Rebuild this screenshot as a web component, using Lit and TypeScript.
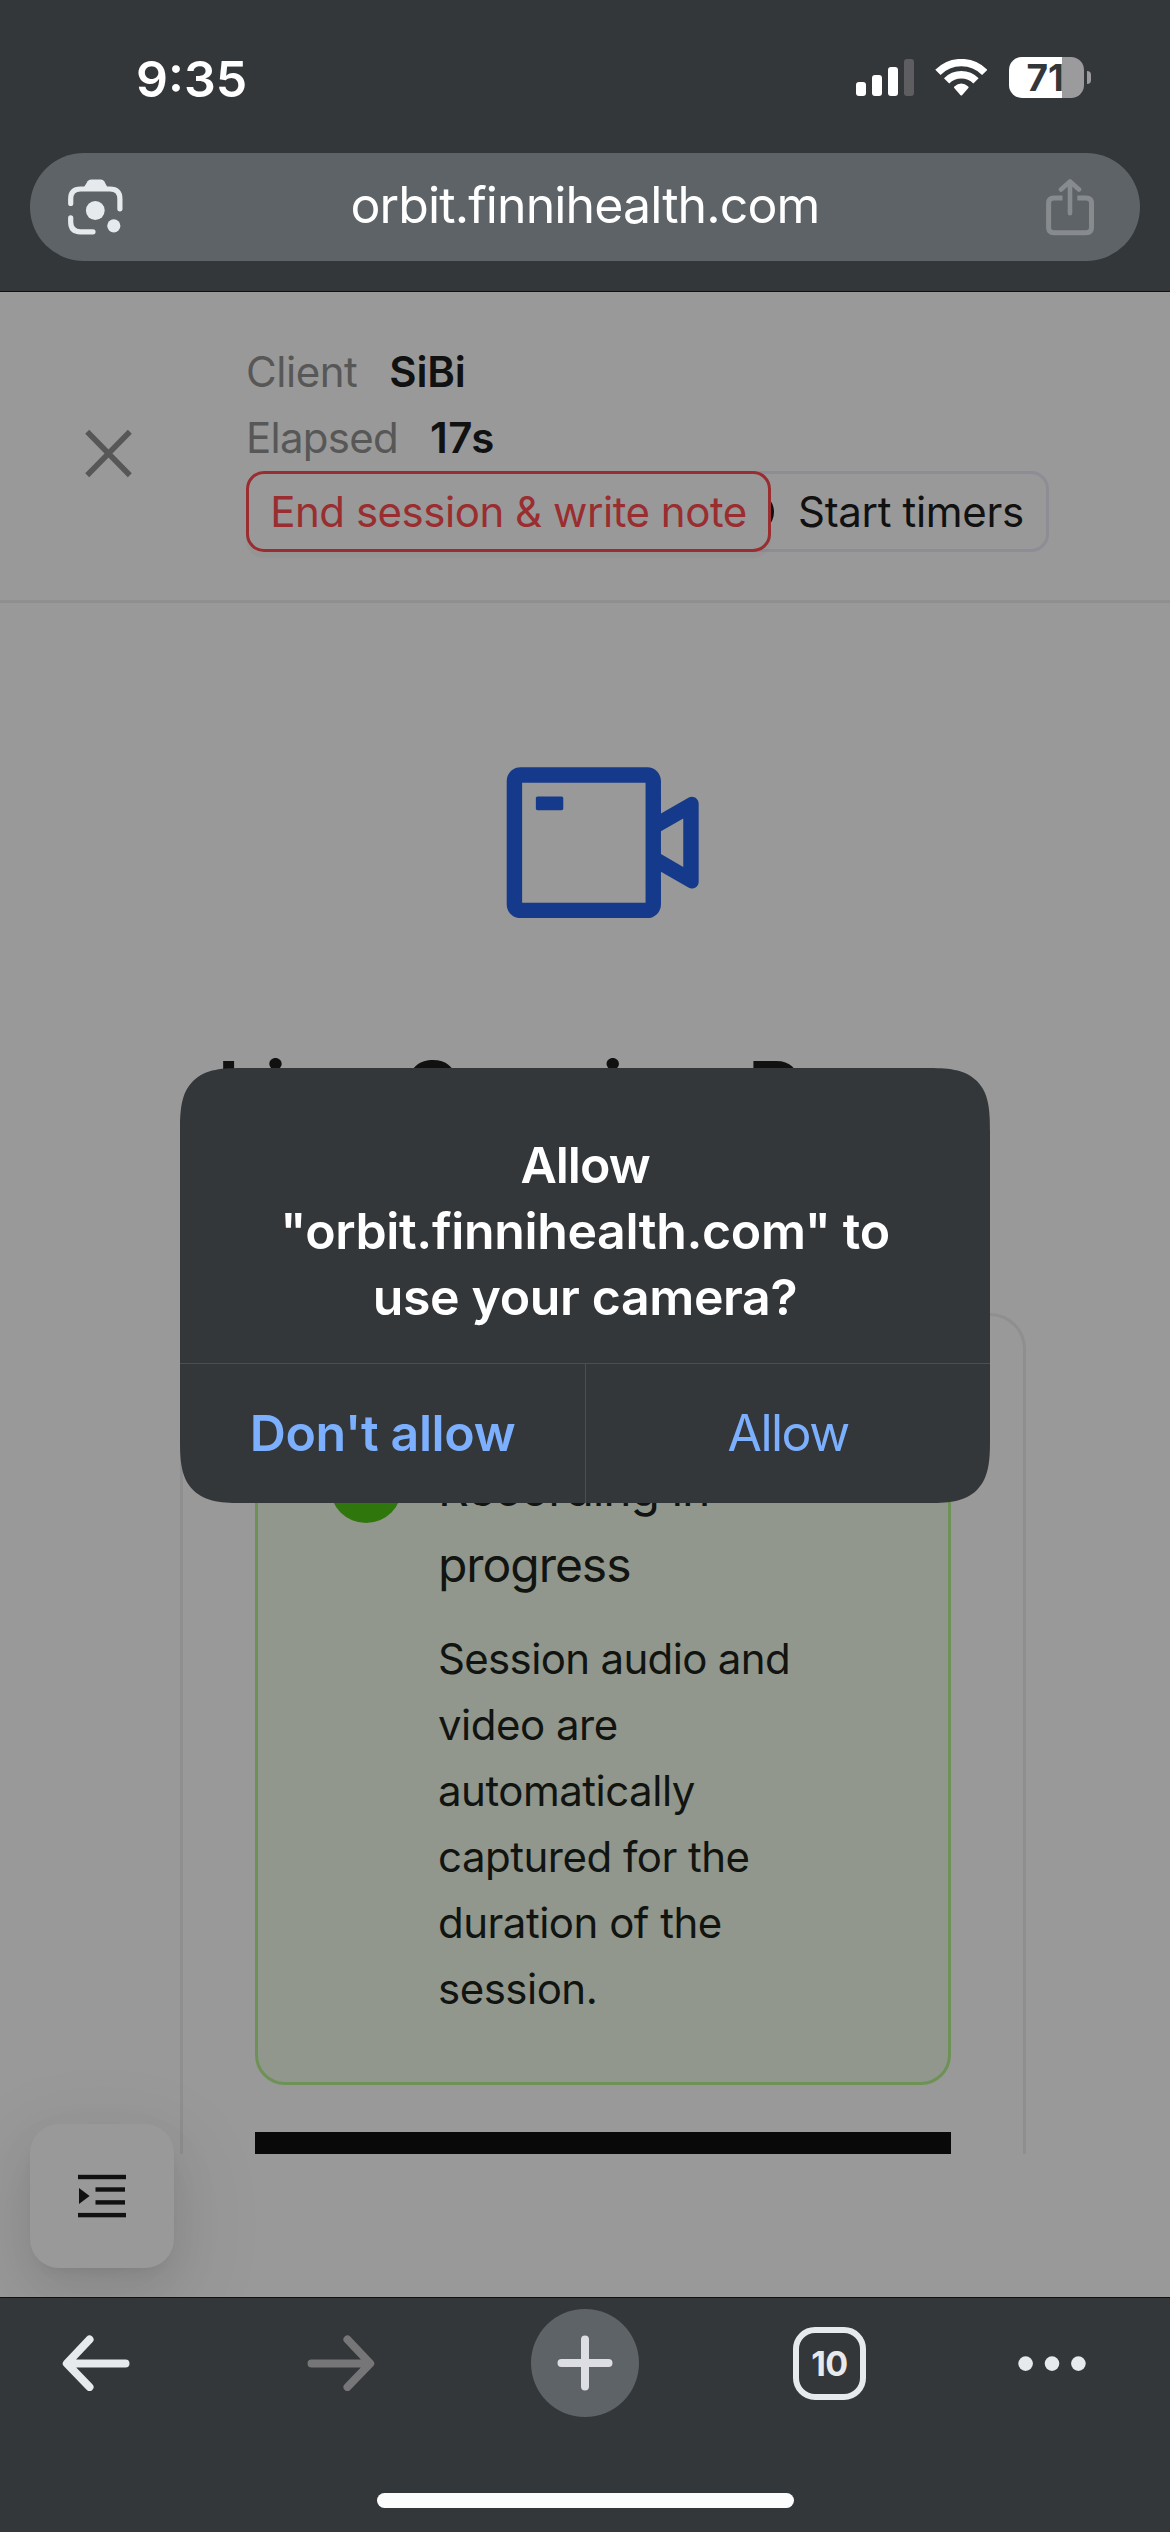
import { LitElement, html, css } from "lit";
import { customElement, property } from "lit/decorators.js";

const base = css`
  * { box-sizing: border-box; }
  :host { display: block; font-family: Inter, "Liberation Sans", sans-serif; }
  svg { display: block; }
`;

@customElement("status-bar")
class StatusBar extends LitElement {
  @property({ type: Number }) battery = 71;
  static styles = [base, css`
    .row { display: flex; height: 153px; padding: 49px 79px 0 136px; color: #fff; }
    .time { font-size: 50px; line-height: 60px; font-weight: 600; letter-spacing: 0; flex: 1; }
    .signal { margin-top: 10px; }
    .wifi { margin: 10px 0 0 21px; }
    .battery {
      margin: 8px 0 0 22px; width: 75px; height: 41px; border-radius: 13px;
      background: linear-gradient(90deg, #fff 53px, #9b9b9d 53px);
      color: #33373a; font-size: 37px; font-weight: 700; line-height: 41px;
      padding-left: 17.5px; letter-spacing: 0;
    }
    .nub { margin: 22px 0 0 3px; width: 4px; height: 13px; border-radius: 0 5px 5px 0; background: #9b9b9d; }
  `];
  render() {
    return html`
      <div class="row">
        <div class="time">9:35</div>
        <svg class="signal" width="58" height="37" viewBox="0 0 58 37" fill="#fff">
          <rect x="0" y="23" width="10" height="14" rx="3" />
          <rect x="16" y="16" width="10" height="21" rx="3" />
          <rect x="32" y="8" width="10" height="29" rx="3" />
          <rect x="48" y="0" width="10" height="37" rx="3" fill="#5e5e60" />
        </svg>
        <svg class="wifi" width="52" height="37" viewBox="935 59 52 37" fill="none" stroke="#fff" stroke-width="7.4">
          <path d="M937.9 72.4A32.8 32.8 0 0 1 984.7 72.4" />
          <path d="M946.6 80.9A20.7 20.7 0 0 1 976 80.9" />
          <path d="M955 87.3Q961.3 82 967.6 87.3L961.3 94.5Z" fill="#fff" stroke-width="2" stroke-linejoin="round" />
        </svg>
        <div class="battery">${this.battery}</div>
        <div class="nub"></div>
      </div>`;
  }
}

@customElement("address-bar")
class AddressBar extends LitElement {
  static styles = [base, css`
    :host { padding: 0 30px 30px; }
    .pill {
      display: flex; align-items: center; justify-content: space-between;
      height: 108px; padding: 0 46px 0 38px; border-radius: 54px; background: #5e6367;
    }
    .url { font-size: 50px; line-height: 60px; letter-spacing: -0.89px; color: #fff; padding: 0 0 4px 1px; }
  `];
  render() {
    return html`
      <div class="pill">
        <svg width="55" height="56" viewBox="68 178.5 55 56" fill="none" stroke="#e6eaed" stroke-width="5.2" stroke-linecap="round">
          <path d="M83.5 187.5L87.6 180.8Q88.8 179 91 179H101Q103 179 104.2 180.8L107.8 187.5Z" fill="#e6eaed" stroke="none" />
          <path d="M70.7 203V198.5Q70.7 188.5 80.5 188.5H110Q119.9 188.5 119.9 198.5V208.3" />
          <path d="M70.7 217.4V221.5Q70.7 231.3 80.5 231.3H93" />
          <circle cx="95.3" cy="210" r="9.4" fill="#e6eaed" stroke="none" />
          <circle cx="113.8" cy="225.3" r="6.6" fill="#e6eaed" stroke="none" />
        </svg>
        <div class="url">orbit.finnihealth.com</div>
        <svg width="48" height="57" viewBox="1046 179.5 48 57" fill="none" stroke="#888b8e" stroke-width="5">
          <path d="M1062.5 198.4H1054Q1048.6 198.4 1048.6 203.5V228Q1048.6 233.2 1054 233.2H1086Q1091.5 233.2 1091.5 228V203.5Q1091.5 198.4 1086 198.4H1077.3" />
          <path d="M1070 213.7V183M1061 190L1070 182L1079 190" stroke-width="4.6" stroke-linecap="round" stroke-linejoin="round" />
        </svg>
      </div>`;
  }
}

@customElement("session-header")
class SessionHeader extends LitElement {
  static styles = [base, css`
    .head { display: flex; height: 311px; border-bottom: 3px solid #8f8f8f; padding-top: 47px; }
    .close { width: 246px; padding: 90px 0 0 84px; }
    .info { font-size: 42px; line-height: 66px; color: #111; }
    .pair { display: flex; gap: 32px; }
    .k { color: #575757; letter-spacing: -0.46px; }
    .k.tight { letter-spacing: -0.73px; }
    .v { font-weight: 600; letter-spacing: -0.2px; }
    .v.wide { letter-spacing: 0.5px; }
    .actions { display: flex; }
    .btn { display: flex; align-items: center; height: 81px; border: 3px solid #8e8d96; border-radius: 18px; background: #999; white-space: nowrap; }
    .end { position: relative; z-index: 1; width: 525px; justify-content: center; border-color: #9a2d2f; color: #9a2d2f; letter-spacing: -0.47px; box-shadow: 0 6px 0 rgba(120, 115, 115, 0.1); }
    .start { width: 344px; margin-left: -66px; padding-left: 24px; gap: 24px; letter-spacing: -0.32px; }
    .dot { width: 42px; height: 42px; border-radius: 50%; background: #111; }
  `];
  render() {
    return html`
      <div class="head">
        <div class="close">
          <svg width="49" height="49" viewBox="0 0 49 49" stroke="#575757" stroke-width="5.6">
            <path d="M3.2 2.8L45.8 46.2M45.8 2.8L3.2 46.2" />
          </svg>
        </div>
        <div class="info">
          <div class="pair"><span class="k">Client</span><span class="v">SiBi</span></div>
          <div class="pair"><span class="k tight">Elapsed</span><span class="v wide">17s</span></div>
          <div class="actions">
            <div class="btn end">End session &amp; write note</div>
            <div class="btn start"><span class="dot"></span>Start timers</div>
          </div>
        </div>
      </div>`;
  }
}

@customElement("session-room")
class SessionRoom extends LitElement {
  static styles = [base, css`
    :host { height: 1551px; overflow: hidden; padding: 130px 144px 0 180px; color: #111; }
    .camera { margin: 0 auto; }
    .title { margin: 89px 0 171px; padding-right: 10px; font-size: 84px; line-height: 101px; font-weight: 600; text-align: center; }
    .card { height: 1000px; border: 3px solid #8f8f8f; border-radius: 36px; padding: 72px 72px 0; }
    .alert { display: flex; gap: 36px; padding: 60px 72px; border: 3px solid #6e9255; border-radius: 30px; background: #91978c; color: #111410; }
    .badge { flex: none; width: 72px; height: 72px; border-radius: 50%; background: #2f760d; }
    .message { font-size: 48px; line-height: 75.4px; letter-spacing: -1.05px; margin-bottom: 24px; }
    .text { font-size: 42px; line-height: 66px; letter-spacing: -0.5px; white-space: nowrap; }
    .first { letter-spacing: -0.66px; }
    .video { margin-top: 47px; height: 400px; background: #090909; }
  `];
  render() {
    return html`
      <svg class="camera" width="219.4" height="219.4" viewBox="0 0 1024 1024" fill="#163a8b">
        <path d="M912 302.3L784 376V224c0-35.3-28.7-64-64-64H128c-35.3 0-64 28.7-64 64v576c0 35.3 28.7 64 64 64h592c35.3 0 64-28.7 64-64V648l128 73.7c21.3 12.3 48-3.1 48-27.6V330c0-24.6-26.7-40-48-27.7zM712 792H136V232h576v560zm176-167l-104-59.8V458.9L888 399v226zM208 360h112c4.4 0 8-3.6 8-8v-48c0-4.4-3.6-8-8-8H208c-4.4 0-8 3.6-8 8v48c0 4.4 3.6 8 8 8z" />
      </svg>
      <div class="title">Live Session Room</div>
      <div class="card">
        <div class="alert">
          <div class="badge"></div>
          <div>
            <div class="message">Recording in<br />progress</div>
            <div class="text"><span class="first">Session audio and</span><br />video are<br />automatically<br />captured for the<br />duration of the<br />session.</div>
          </div>
        </div>
        <div class="video"></div>
      </div>`;
  }
}

@customElement("permission-dialog")
class PermissionDialog extends LitElement {
  @property() site = "";
  static styles = [base, css`
    :host { width: 810px; height: 435px; border-radius: 45px; background: #33373a; color: #fff; overflow: hidden; }
    @supports (corner-shape: squircle) {
      :host { border-radius: 64px; corner-shape: superellipse(1.6); }
    }
    .ask { height: 296px; padding-top: 64px; border-bottom: 1px solid #4b4f52; text-align: center; font-size: 50px; line-height: 66px; font-weight: 600; letter-spacing: -0.37px; }
    .first { letter-spacing: -1px; }
    .buttons { display: grid; grid-template-columns: 405px 405px; height: 139px; color: #7cb0ff; font-size: 50px; line-height: 139px; text-align: center; }
    .deny { font-weight: 600; letter-spacing: -0.35px; }
    .allow { border-left: 1px solid #4b4f52; letter-spacing: -1.5px; }
  `];
  render() {
    return html`
      <div class="ask"><span class="first">Allow</span><br />"${this.site}" to<br />use your camera?</div>
      <div class="buttons"><div class="deny">Don't allow</div><div class="allow">Allow</div></div>`;
  }
}

@customElement("bottom-bar")
class BottomBar extends LitElement {
  @property({ type: Number }) tabs = 10;
  static styles = [base, css`
    :host { position: relative; height: 235px; background: #33373a; border-top: 1px solid #101112; }
    .tools { display: grid; grid-template-columns: 191px 299px 190px 299px 146px; height: 130px; align-items: center; justify-items: center; }
    .new { display: grid; place-items: center; width: 108px; height: 108px; border-radius: 50%; background: #5e6367; }
    .tabs { width: 73px; height: 73px; border: 6.5px solid #e6eaed; border-radius: 22px; display: grid; place-items: center; color: #e6eaed; font-size: 34px; line-height: 42px; font-weight: 700; letter-spacing: -0.5px; padding-top: 2px; }
    .home { width: 417px; height: 15px; border-radius: 8px; background: #fdfdfd; margin: 65px auto 0; }
  `];
  render() {
    return html`
      <div class="tools">
        <svg width="68" height="56" viewBox="0 0 68 56" fill="none" stroke="#e6eaed" stroke-width="8" stroke-linecap="round" stroke-linejoin="round">
          <path d="M63.5 28.4H6M27.5 4.5L4.8 28.4L27.5 52" />
        </svg>
        <svg width="68" height="56" viewBox="0 0 68 56" fill="none" stroke="#767678" stroke-width="8" stroke-linecap="round" stroke-linejoin="round">
          <path d="M4.5 28.4H62M40.5 4.5L63.2 28.4L40.5 52" />
        </svg>
        <div class="new">
          <svg width="56" height="56" viewBox="0 0 56 56" stroke="#dcdee3" stroke-width="8" stroke-linecap="round">
            <path d="M28 4.5V51.5M4.5 28H51.5" />
          </svg>
        </div>
        <div class="tabs">${this.tabs}</div>
        <svg width="68" height="16" viewBox="0 0 68 16" fill="#e6eaed">
          <circle cx="7.6" cy="8.6" r="7.3" /><circle cx="34" cy="8.6" r="7.3" /><circle cx="60.4" cy="8.6" r="7.3" />
        </svg>
      </div>
      <div class="home"></div>`;
  }
}

@customElement("app-root")
class AppRoot extends LitElement {
  static styles = [base, css`
    :host { position: relative; width: 1170px; height: 2532px; overflow: hidden; background: #999; }
    .screen { display: flex; flex-direction: column; height: 100%; }
    .top { background: #33373a; border-bottom: 1px solid #101112; height: 292px; }
    .page { height: 2005px; position: relative; overflow: hidden; }
    .toc {
      position: absolute; left: 30px; top: 1832px; width: 144px; height: 144px; border-radius: 29px; background: #999;
      display: grid; place-items: center;
      box-shadow: 0 18px 48px rgba(0, 0, 0, 0.08), 0 9px 18px -12px rgba(0, 0, 0, 0.12), 0 27px 84px 24px rgba(0, 0, 0, 0.05);
    }
    .dialog { position: absolute; left: 180px; top: 1068px; }
  `];
  render() {
    return html`
      <div class="screen">
        <div class="top">
          <status-bar></status-bar>
          <address-bar></address-bar>
        </div>
        <div class="page">
          <session-header></session-header>
          <session-room></session-room>
          <div class="toc">
            <svg width="48" height="44" viewBox="0 0 48 44" fill="#111">
              <rect x="0" y="0.8" width="48" height="4.4" />
              <rect x="17.5" y="13.3" width="29.5" height="4.4" />
              <rect x="17.5" y="26.2" width="29.5" height="4.4" />
              <rect x="0" y="38.9" width="48" height="4.4" />
              <path d="M1 14L11.6 22L1 30Z" />
            </svg>
          </div>
        </div>
        <bottom-bar></bottom-bar>
      </div>
      <permission-dialog class="dialog" site="orbit.finnihealth.com"></permission-dialog>`;
  }
}
